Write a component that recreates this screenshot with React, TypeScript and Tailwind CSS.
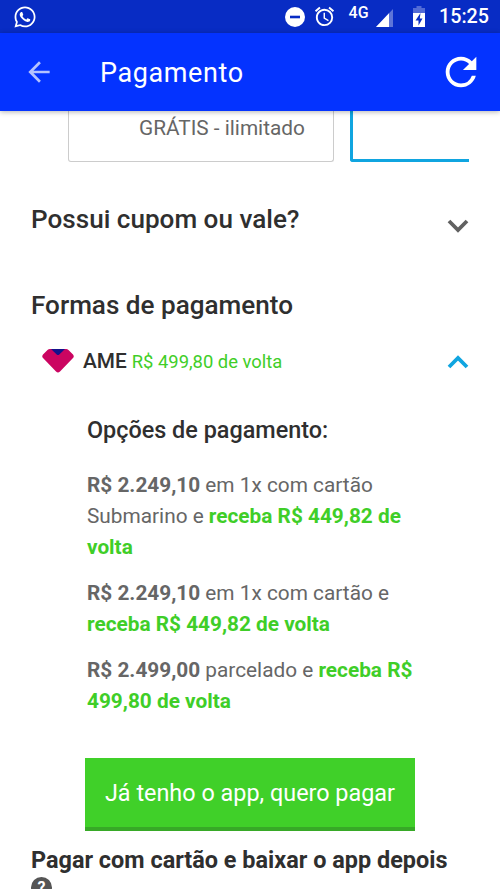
import { useState } from 'react';
import { FaWhatsapp } from 'react-icons/fa';
import { MdAlarm, MdArrowBack, MdRefresh } from 'react-icons/md';

interface Option {
  price: string;
  detail: string;
  cashback: string;
}

const options: Option[] = [
  { price: 'R$ 2.249,10', detail: 'em 1x com cartão Submarino e', cashback: 'receba R$ 449,82 de volta' },
  { price: 'R$ 2.249,10', detail: 'em 1x com cartão e', cashback: 'receba R$ 449,82 de volta' },
  { price: 'R$ 2.499,00', detail: 'parcelado e', cashback: 'receba R$ 499,80 de volta' },
];

function StatusBar() {
  return (
    <div className="flex h-[33px] shrink-0 items-center bg-[#082cc4] pl-[13px] pr-[11px] text-white">
      <FaWhatsapp className="size-[24px]" />
      <svg className="ml-auto size-[20px]" viewBox="0 0 20 20">
        <circle cx="10" cy="10" r="10" fill="#fff" />
        <path d="M5 10H15" stroke="#082cc4" strokeWidth="2.6" />
      </svg>
      <MdAlarm className="ml-[8px] size-[23px]" />
      <span className="ml-[12px] mb-[8px] text-[16px] leading-none font-medium tracking-[0.3px]">4G</span>
      <svg className="ml-[7px] mt-[2px] h-[18px] w-[17px]" viewBox="0 0 17 18">
        <path d="M0 18 17 0V18Z" fill="#fff" fillOpacity="0.35" />
        <path d="M0 18 13 4.200V18Z" fill="#fff" />
      </svg>
      <svg className="ml-[20px] h-[21px] w-[12px]" viewBox="0 0 12 21">
        <path d="M3.5 0h5v2H12v6H0V2h3.5Z" fill="#fff" fillOpacity="0.3" />
        <path d="M0 7h12v14H0Z" fill="#fff" />
        <path d="M7.5 7 2.5 14.5H5.5V19.5L9.5 12.5H6.8Z" fill="#082cc4" />
      </svg>
      <span className="ml-[14px] text-[19.7px] leading-none font-medium">15:25</span>
    </div>
  );
}

function Chevron({ open }: { open: boolean }) {
  return (
    <svg className={open ? 'text-[#10a5e0]' : 'text-[#616161]'} width="22" height="14" viewBox="0 0 22 14">
      <path
        d={open ? 'M2 12 11 3 20 12' : 'M2 2 11 11 20 2'}
        fill="none"
        stroke="currentColor"
        strokeWidth="3.8"
      />
    </svg>
  );
}

function AmeLogo() {
  return (
    <svg width="32" height="24" viewBox="0 0 32 24">
      <path d="M8 0H24Q25.5 0 26.5 1L31 5.5Q32.5 7.5 31 9L18 22.5Q16 24.5 14 22.5L1 9Q-.5 7.5 1 5.5L5.5 1Q6.500 0 8 0Z" fill="#cb0561" />
      <path d="M9 0H23L17 5.7Q16 6.500 15 5.7Z" fill="#14128c" />
    </svg>
  );
}

export default function App() {
  const [couponOpen, setCouponOpen] = useState(false);
  const [ameOpen, setAmeOpen] = useState(true);

  return (
    <div className="flex h-[889px] w-[500px] flex-col overflow-hidden bg-white font-['Roboto',sans-serif] text-[#2f2f2f]">
      <StatusBar />
      <header className="z-10 flex h-[78px] shrink-0 items-center bg-[#0433ff] pl-[23px] pr-[16px] text-white shadow-[0_1px_5px_rgba(0,0,0,0.3)]">
        <MdArrowBack className="size-[32px] opacity-70" />
        <h1 className="ml-[45px] mt-[3px] text-[27px] leading-none tracking-[0.6px]">Pagamento</h1>
        <MdRefresh className="ml-auto size-[46px]" />
      </header>

      <main className="px-[31px]">
        <div className="flex h-[51px] overflow-hidden pl-[37px]">
          <div className="w-[266px] shrink-0 rounded-b-[3px] border border-t-0 border-[#ccc] pt-[4px] pl-[70px] text-[20.8px] leading-[26px] text-[#666]">
            GRÁTIS - ilimitado
          </div>
          <div className="ml-[16px] w-[266px] shrink-0 rounded-b-[3px] border-[3px] border-t-0 border-[#10a5e0]" />
        </div>

        <button className="mt-[39px] flex h-[36px] w-full items-center justify-between" onClick={() => setCouponOpen(!couponOpen)}>
          <span className="text-[26.1px] leading-[36px] font-medium">Possui cupom ou vale?</span>
          <span className="mt-[14px]"><Chevron open={couponOpen} /></span>
        </button>

        <h2 className="mt-[50px] text-[26.1px] leading-[36px] font-medium">Formas de pagamento</h2>

        <button className="mt-[23px] flex h-[30px] w-full items-center pl-[11px]" onClick={() => setAmeOpen(!ameOpen)}>
          <AmeLogo />
          <span className="ml-[9px] mt-[2px] text-[20.8px] font-medium">AME</span>
          <span className="ml-[5px] mt-[2px] text-[18.4px] text-[#3fce28]">R$ 499,80 de volta</span>
          <span className="mt-[2px] ml-auto"><Chevron open={ameOpen} /></span>
        </button>

        {ameOpen && (
          <section className="pt-[38px] pl-[56px]">
            <h3 className="text-[23.4px] leading-[32px] font-medium">Opções de pagamento:</h3>
            <div className="mt-[24px] flex w-[330px] flex-col gap-[15px] text-[20.8px] leading-[31px] text-[#666]">
              {options.map((opt, i) => (
                <p key={i}>
                  <b>{opt.price}</b> {opt.detail} <b className="text-[#3fce28]">{opt.cashback}</b>
                </p>
              ))}
            </div>
            <button className="mt-[41px] -ml-[2px] h-[73px] w-[330px] border-b-4 border-[#37a927] bg-[#40d029] pt-[3px] text-[23.4px] text-white">
              Já tenho o app, quero pagar
            </button>
          </section>
        )}

        <p className="mt-[13px] text-[23.45px] leading-[32px] font-bold whitespace-nowrap">Pagar com cartão e baixar o app depois</p>
        <span className="mt-px flex size-[21px] items-center justify-center rounded-full bg-[#555] text-[16px] font-bold text-white">?</span>
      </main>
    </div>
  );
}
